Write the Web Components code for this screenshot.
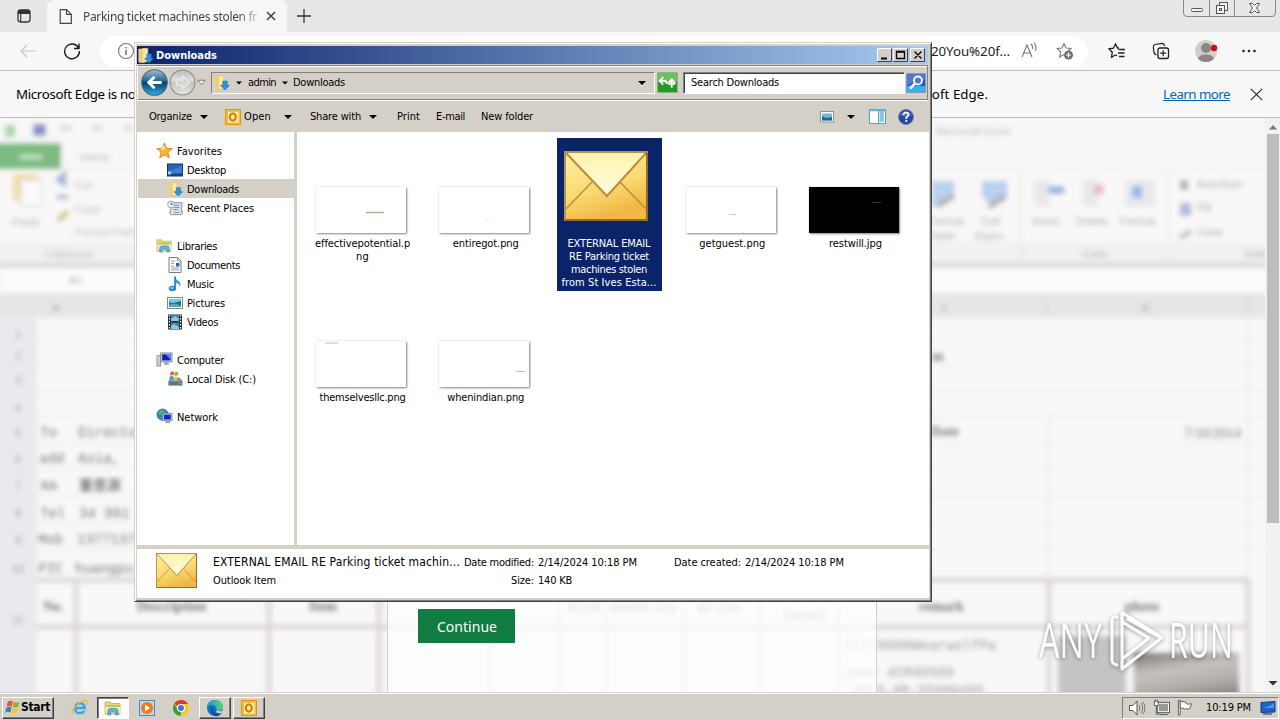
<!DOCTYPE html>
<html lang="en">
<head>
<meta charset="utf-8">
<title>Downloads</title>
<style>
  body { margin: 0; width: 1280px; height: 720px; overflow: hidden; }
</style>
</head>
<body>
<desk-top></desk-top>

<script>
const UI_FONT = `font: 11px/13px "DejaVu Sans Condensed", "DejaVu Sans", sans-serif;`;
const WEB_FONT = `font-family: "Noto Sans", "Open Sans", sans-serif;`;

// every icon: [viewBox size, markup]
const ICONS = {
  tabs: [16, `<rect x="2" y="2" width="12" height="12" rx="2.4" fill="none" stroke="#333" stroke-width="1.3"/><path d="M2 3.5Q2 2 4 2h8q2 0 2 2v2H2z" fill="#333"/><path d="M4.700 5v9" stroke="#333" stroke-width="1.1"/>`],
  page: [16, `<path d="M3 1.5h6l4.5 4.5v8.5H3zM9 1.5V6h4.5" fill="none" stroke="#444" stroke-width="1.1" stroke-linejoin="round"/>`],
  close: [16, `<path d="M4 4l8 8M12 4l-8 8" stroke="#444" stroke-width="1.6"/>`],
  cross: [16, `<path d="M1 1l14 14M15 1L1 15" stroke="#222" stroke-width="1.3"/>`],
  plus: [16, `<path d="M8 1v14M1 8h14" stroke="#333" stroke-width="1.3"/>`],
  back: [18, `<path d="M17 9H2M8 3L2 9l6 6" fill="none" stroke="#c6c6c6" stroke-width="1.2"/>`],
  reload: [18, `<path d="M15.7 6.2A7.4 7.4 0 1 0 16.4 9M16 1.5v5h-5" fill="none" stroke="#1b1b1b" stroke-width="1.4"/>`],
  info: [18, `<circle cx="9" cy="9" r="7.5" fill="none" stroke="#777" stroke-width="1.1"/><path d="M9 8v5M9 5v1.4" stroke="#666" stroke-width="1.4"/>`],
  read: [18, `<path d="M2 15L7 3l5 12M4 11h6M11 2q2.5 2.500 1.500 5M14 .8q3 3.500 1.500 8" fill="none" stroke="#777" stroke-width="1.1"/>`],
  starplus: [18, `<path d="M8 1.500l2 4.500 5 .5-3 3M8 1.500L6 6 1.200 6.500l3.500 3.500-1 5L8 12.500" fill="none" stroke="#777" stroke-width="1.1"/><circle cx="12.500" cy="13" r="4.500" fill="#707070"/><path d="M12.500 10.500v5M10 13h5" stroke="#fff" stroke-width="1.1"/>`],
  favs: [18, `<path d="M11 6H9.500L7.500 2 5.500 6.200 1 6.800l3.300 3.400-.8 5L7.500 13l1.500.8M10.500 7.500H17M10 11h6.500M11 14.500h5.500" fill="none" stroke="#222" stroke-width="1.3"/>`],
  collections: [18, `<rect x="6" y="6" width="10.500" height="10.500" rx="2" fill="none" stroke="#222" stroke-width="1.3"/><path d="M4.500 13Q2.500 12.500 2 10.500L1.300 5Q1.300 3 3 2.500L10 1.300q2 0 2.700 2.700M11.200 8.200v6M8.200 11.200h6" fill="none" stroke="#222" stroke-width="1.2"/>`],
  user: [24, `<clipPath id="c"><circle cx="12" cy="12" r="11"/></clipPath><circle cx="12" cy="12" r="11" fill="#cfcecc"/><g clip-path="url(#c)"><circle cx="12" cy="9" r="5" fill="#8b8683"/><ellipse cx="12" cy="20" rx="8" ry="4.500" fill="#8b8683"/></g><circle cx="20" cy="9" r="3.200" fill="#d20a18"/>`],
  dots: [18, `<g fill="#222"><circle cx="3.500" cy="9" r="1.300"/><circle cx="9" cy="9" r="1.300"/><circle cx="14.500" cy="9" r="1.300"/></g>`],

  downloads: [18, `<path d="M1.500 2l8-1 1.500 1v13.500l-8 1.500-1.500-1.500z" fill="#ecd27a"/><path d="M5.500 1.800l6-.5v14l-6 1.500z" fill="#f9e8a6" stroke="#d5b35b" stroke-width=".6"/><path d="M10.500 7.500h4.500v4.500h2.500L12.700 17 8 12h2.500z" fill="#2d95dc" stroke="#1470b5" stroke-width=".7"/>`],
  star: [18, `<path d="M9 1l2.200 5.600 6 .4-4.600 3.900 1.500 5.900L9 13.600l-5.100 3.200 1.500-5.900L.8 7l6-.4z" fill="#fbb52f" stroke="#c9731a" stroke-width=".8"/><path d="M9 3l1.300 4.600-6 .8z" fill="#ffe38c"/>`],
  desktop: [16, `<rect x=".5" y="2" width="15" height="12" fill="#2565b8" stroke="#17335f"/><path d="M1 9Q8 8 15 3v8H1z" fill="#377fd0"/><path d="M1 12h14v1.500H1z" fill="#153c75"/><circle cx="2.500" cy="11" r="1.800" fill="#a8d1ee"/>`],
  recent: [18, `<path d="M5 3h12l-1 10h2q0 3.500-2 3.500H5q-2 0-2-3h1z" fill="#dfe5e9" stroke="#7c8993"/><path d="M9 6h5M8 8.500h6M7 11h6M8 14h6" stroke="#6883a2"/><circle cx="4.500" cy="5" r="3.800" fill="#f2f5f8" stroke="#8a98a8"/><path d="M4.500 3v2h2" fill="none" stroke="#445"/>`],
  libraries: [18, `<path d="M1 3h5l1.500 1.500H16V15H1z" fill="#f1d577" stroke="#c59d3f" stroke-width=".7"/><path d="M2.500 6H15v4H2.500z" fill="#96d36c"/><path d="M1.500 8h15v6h-15z" fill="#f9ebad"/><path d="M4 16v-4q0-2.500 3-2.500h4q3 0 3 2.500v4h-2.500v-3h-5v3z" fill="#60b5e8" stroke="#2d83bd" stroke-width=".7"/>`],
  document: [16, `<path d="M2 .5h8.500L14 4v11.500H2z" fill="#fff" stroke="#747d88"/><path d="M10.500.5V4H14M4 4h4M4 6.500h3M4 9h3M4 11h8M4 13h8" fill="none" stroke="#8b9db5"/><path d="M9 6h3.500v3.500H9z" fill="#286bb4"/>`],
  music: [16, `<path d="M8 .5q.5 3 3.500 4.500 3 2 1.500 6Q12.500 7.500 9 7v5" fill="#3ba0df"/><path d="M8 .5v12" stroke="#1978be" stroke-width="1.6"/><ellipse cx="5.500" cy="12.500" rx="3.700" ry="2.800" fill="#1d8cd6"/><ellipse cx="5" cy="12" rx="1.800" ry="1" fill="#7cc9f4"/>`],
  picture: [16, `<rect x=".5" y="2.500" width="15" height="11" fill="#fff" stroke="#7e8893"/><path d="M2 4h12v8H2z" fill="#74c6ea"/><path d="M2 7l4 1 8-2v6H2z" fill="#167594"/><path d="M2 10q6-3 12 1v1H2z" fill="#63a99a"/>`],
  video: [16, `<rect x="1" y=".5" width="14" height="15" fill="#222c38"/><path d="M4 1h8v6H4zM4 8.500h8V15H4z" fill="#3d83b5"/><path d="M4 5l4-3 4 3v2H4zM4 12l3-2 5 3v2H4z" fill="#8fc8e2"/><path d="M2.500 1v15M13.500 1v15" stroke="#fff" stroke-width="1.200" stroke-dasharray="1.500 1.500"/>`],
  computer: [18, `<rect x="1" y="5" width="4" height="11" fill="#cbcfd4" stroke="#777" stroke-width=".7"/><rect x="5" y="2" width="12" height="9.500" fill="#c9d1dd" stroke="#707885" stroke-width=".8"/><path d="M6.500 3.500h9V10h-9z" fill="#1020c8"/><path d="M10 3.500h5.500V9z" fill="#6d80ff"/><path d="M9 11.500h4l1 3H8z" fill="#9da5ae"/>`],
  disk: [18, `<path d="M2 11l3-3h9l3 3v5H2z" fill="#8b9ba5" stroke="#55636d" stroke-width=".7"/><path d="M2.500 12h14v3.500h-14z" fill="#52798b"/><path d="M13 14h2" stroke="#5f5"/><path d="M4 1.500q2-1.500 4-.5l-.6 4q-2-1-4 .3z" fill="#e95d2c"/><path d="M8.700 1q2 .8 4-.3l-.6 4q-2 1-4 .2z" fill="#7cb93b"/><path d="M3.200 6.200q2-1 4-.2L6.600 10q-2-1-4 .2z" fill="#35a2de"/><path d="M8 6q2 .8 4-.2l-.6 4q-2 1-4 .2z" fill="#fac837"/>`],
  network: [18, `<circle cx="7" cy="7" r="6" fill="#2e88cd" stroke="#205b8e" stroke-width=".7"/><path d="M3 4q3-3 6-1L7 6 3 8zM6 9l4-1v4H7z" fill="#51b65a"/><rect x="7" y="5.500" width="10" height="8" fill="#c9d1dd" stroke="#687280" stroke-width=".7"/><path d="M8.300 7h7.400v5.200H8.300z" fill="#1326cb"/><path d="M10.500 13.500h4l1 2.500h-6z" fill="#9aa3ad"/>`],
  outlook: [16, `<rect x=".5" y=".5" width="15" height="15" fill="#f4bd35" stroke="#dc9718"/><rect x="3" y="3" width="10.500" height="10.500" fill="#fff1bd"/><ellipse cx="7.800" cy="8" rx="3" ry="3.700" fill="none" stroke="#d78300" stroke-width="2.300"/>`],
  view: [16, `<rect x="1.500" y="2.500" width="13" height="10.500" fill="#fff" stroke="#8296a5"/><path d="M3 4.500h10v7H3z" fill="#69bce2"/><path d="M3 7l4 2 6-1v3.500H3z" fill="#236b80"/>`],
  preview: [16, `<rect x=".5" y="1.500" width="15" height="13" fill="#fff" stroke="#58a0c8"/><path d="M10 3h4v10h-4z" fill="#8dc3e2"/><path d="M1 2.500h14M9 2v12" stroke="#58a0c8"/>`],
  help: [16, `<circle cx="8" cy="8" r="7.500" fill="#2247a9" stroke="#7382a9"/><path d="M2 6Q8-2 14 6 8 9 2 6z" fill="#6488dc" opacity=".65"/><path d="M5.500 6q0-2.300 2.500-2.300T10.500 6Q10.500 7.300 8.300 8.300V10" fill="none" stroke="#fff" stroke-width="1.700"/><circle cx="8.300" cy="12" r="1.100" fill="#fff"/>`],
  navback: [26, `<defs><linearGradient id="g" x2="0" y2="1"><stop stop-color="#a7bfce"/><stop offset=".45" stop-color="#1c6491"/><stop offset=".5" stop-color="#073e65"/><stop offset="1" stop-color="#2ab1e5"/></linearGradient></defs><circle cx="13" cy="13" r="12.300" fill="url(#g)" stroke="#436480"/><path d="M20 13H8M13 7.500L7.500 13l5.500 5.500" fill="none" stroke="#fff" stroke-width="2.800"/>`],
  navnext: [26, `<defs><linearGradient id="g" x2="0" y2="1"><stop stop-color="#bbb"/><stop offset=".4" stop-color="#ddd"/><stop offset=".5" stop-color="#c6c4bf"/><stop offset="1" stop-color="#e8e6e1"/></linearGradient></defs><circle cx="13" cy="13" r="12" fill="url(#g)" stroke="#888"/><path d="M7 10.500h6V7l6.500 6-6.500 6v-3.500H7z" fill="#d6d4d0" stroke="#eee" stroke-width="1.100"/>`],
  refresh: [20, `<rect x=".5" y=".5" width="19" height="19" rx="1" fill="#239a26" stroke="#8cb38c"/><path d="M1 1h18v8q-9 3-18 0z" fill="#6cc062"/><path d="M3 8.500h6M6 5L2.500 8.500 6 12M9 8.500v3M17 11.500h-6M14 15v-7M10.500 11l3.500-4 3.500 4" fill="none" stroke="#fff" stroke-width="1.700"/>`],
  search: [20, `<rect x=".5" y=".5" width="19" height="19" rx="1" fill="#2856c8" stroke="#7f96bd"/><path d="M1 13h18v6H1z" fill="#2bb5e9"/><path d="M1 1h18v6Q9 7 1 13z" fill="#5577d3"/><circle cx="12" cy="7.500" r="4" fill="#4a77d8" stroke="#fff" stroke-width="1.800"/><path d="M9 10.500l-5 5" stroke="#fff" stroke-width="2.500"/>`],

  winflag: [18, `<path d="M4 3q3-2 5.500-.3L8.300 8Q5.500 6.500 2.800 8.200z" fill="#e8562a"/><path d="M10.300 3q3 1.600 6-.2L15 8q-3 1.700-5.800.2z" fill="#7db93c"/><path d="M2.500 9.200Q5.200 7.500 8 9l-1.200 5.300Q4 12.700 1.200 14.500z" fill="#2f7fd1"/><path d="M9 9.200q3 1.600 5.800 0l-1.300 5.300q-2.800 1.700-5.700 0z" fill="#f9c52e"/>`],
  ie: [18, `<path d="M5 9.500h9.500Q14 4.500 9.500 4.500T4.500 9.800 9.500 15q3 0 4.800-2.300" fill="none" stroke="#35a7e3" stroke-width="2.500"/><path d="M2 16Q-1 13 7 6t10-4q1 1-1 4" fill="none" stroke="#e9b338" stroke-width="1.300"/>`],
  wmp: [16, `<rect x=".5" y=".5" width="15" height="15" fill="#b8d8f1" stroke="#4f89c0"/><circle cx="8" cy="8" r="6" fill="#f47b12"/><path d="M6 4.500l5 3.500-5 3.500z" fill="#fff"/>`],
  chrome: [18, `<circle cx="9" cy="9" r="8" fill="#f8c91d"/><path d="M9 9L2 5a8 8 0 0 1 14 .1H9z" fill="#df3b2d"/><path d="M9 9l-.5 8A8 8 0 0 1 2 5l4 6z" fill="#2c9f4c"/><circle cx="9" cy="9" r="4" fill="#fff"/><circle cx="9" cy="9" r="3" fill="#3477e6"/>`],
  edge: [18, `<defs><linearGradient id="g"><stop stop-color="#169bdf"/><stop offset="1" stop-color="#62d36b"/></linearGradient></defs><circle cx="9" cy="9" r="8" fill="#1271c3"/><path d="M1 9Q1 1 9 1t8 7q0 4-5 4-2 0-1.500-2Q10 6 6.500 6 2 6 1 9z" fill="url(#g)"/><path d="M7 8q-2 7 7 6.500l2-.8Q13 18 9 17 4 15 5 10z" fill="#114f9f"/><path d="M11 11.500q3 1.500 6 0L15.500 14q-3.500.8-5.500-1z" fill="#d4d0c8"/>`],
  volume: [18, `<path d="M1.500 6.500H5L9 2v14l-4-4.500H1.500z" fill="#fff" stroke="#555"/><path d="M11 6q2 3 0 6M13 4q3.500 5 0 10M15.200 3q3.500 6 0 12" fill="none" stroke="#777"/>`],
  lan: [18, `<rect x="5.500" y="4.500" width="11" height="9" fill="#999" stroke="#fff"/><rect x="4.500" y="3.500" width="13" height="11" fill="none" stroke="#555"/><path d="M8 16.500h8" stroke="#555"/><path d="M1.500 2v5h4V2M3.500 7v9h5M2.500.5V3M4.500.5V3" fill="none" stroke="#555"/><path d="M2 3.500h3v3H2z" fill="#fff"/>`],
  flag: [18, `<path d="M2.500 17V1.500h2V17z" fill="#fff" stroke="#555"/><path d="M4.500 3q3-1 6 .5 0 1.500 1.500 2l4.500-.5-2 5.500H9Q7 9 4.500 10z" fill="#fff" stroke="#555"/>`],
  screen: [16, `<path d="M1 2.500l14-1v10.500l-14 .5z" fill="#1c64c8" stroke="#0c3e8d"/><path d="M2 8Q8 8 14 3v5z" fill="#4d97ea"/><path d="M3 14h9" stroke="#3d6189" stroke-width="1.500"/>`],
  down: [8, `<path d="M0 2h8L4 6z" fill="#000"/>`],
  hollow: [10, `<path d="M.8 2.500h8.400L5 7.500z" fill="#eee" stroke="#777"/>`],
  up: [10, `<path d="M1 7.500h8L5 3z" fill="#777"/>`],
  scrolldown: [10, `<path d="M.5 3h9L5 7.500z" fill="#333"/>`]
};

class UiIcon extends HTMLElement {
  connectedCallback() {
    const size = this.getAttribute('size') || 16;
    const [box, art] = ICONS[this.getAttribute('name')];
    this.attachShadow({ mode: 'open' }).innerHTML = `
      <style>:host { display: block; flex: none; width: ${size}px; height: ${size}px } svg { display: block }</style>
      <svg width="${size}" height="${size}" viewBox="0 0 ${box} ${box}">${art}</svg>`;
  }
}

// One line of text, tracked so that it takes exactly `w` pixels
class FitText extends HTMLElement {
  connectedCallback() {
    this.attachShadow({ mode: 'open' }).innerHTML = `
      <style>:host { display: block; flex: none; white-space: nowrap; width: ${this.getAttribute('w')}px }
      span { display: inline-block; text-decoration: inherit }</style><span><slot></slot></span>`;
    const span = this.shadowRoot.querySelector('span');
    const rest = this.getAttribute('w') - span.getBoundingClientRect().width;
    span.style.letterSpacing = `${rest / this.textContent.length}px`;
  }
}

class MailEnvelope extends HTMLElement {
  connectedCallback() {
    this.attachShadow({ mode: 'open' }).innerHTML = `
      <style>:host { display: block } svg { display: block; width: 100%; height: 100% }</style>
      <svg viewBox="0 0 84 70" preserveAspectRatio="none">
        <defs>
          <linearGradient id="body" x1="0" y1="0" x2=".4" y2="1"><stop stop-color="#fff0a8"/><stop offset=".6" stop-color="#f9da72"/><stop offset="1" stop-color="#f0b843"/></linearGradient>
          <linearGradient id="flap" x1="0" y1="0" x2="0" y2="1"><stop stop-color="#fff3b0"/><stop offset="1" stop-color="#fffbe0"/></linearGradient>
        </defs>
        <rect x="1" y="1" width="82" height="68" fill="url(#body)" stroke="#b7944d" stroke-width="2"/>
        <path d="M2 58L28 31M82 58L56 31" stroke="#c4933c" stroke-width="1.800"/>
        <path d="M2 2L43 45 82 2z" fill="url(#flap)"/>
        <path d="M2 2L43 45 82 2" fill="none" stroke="#b98b3a" stroke-width="2"/>
        <path d="M1 69h82V2" fill="none" stroke="#886126" stroke-width="1.600"/>
      </svg>`;
  }
}

class EdgeHeader extends HTMLElement {
  constructor() {
    super();
    this.attachShadow({ mode: 'open' }).innerHTML = `
    <style>
      :host { display: block; ${WEB_FONT} color: #222; background: #f7f7f7 }
      .strip { display: flex; height: 32px; background: #e7e7e7; align-items: center }
      .strip > ui-icon { margin-left: 16px }
      .tab { display: flex; align-items: center; width: 240px; height: 32px; margin-left: 15px; padding-left: 10px; box-sizing: border-box; background: #f7f7f7; border-radius: 7px 7px 0 0; font-size: 12px; color: #444 }
      .tab fit-text { margin: 0 6px 0 9px; -webkit-mask: linear-gradient(90deg, #000 88%, #0004) }
      .tab + ui-icon { margin-left: 9px }
      .caption { display: flex; align-self: flex-start; margin: -1px 4px 0 auto; height: 18px; width: 93px; box-sizing: border-box; border: 1px solid #888; border-radius: 0 0 4px 4px }
      .caption svg { display: block }
      .tools { display: flex; height: 38px; align-items: center; border-bottom: 1px solid #bcbcbc; font-size: 13.300px }
      .tools > .back { margin: 0 26px 0 19px }
      .pill { display: flex; align-items: center; width: 988px; height: 31px; margin-left: 19px; padding: 0 14px 0 17px; box-sizing: border-box; border-radius: 16px; background: #fff }
      .pill fit-text { margin-left: auto; color: #222 }
      .pill .read { margin: 0 18px 0 10px }
      .tools > .favs { margin: 0 26px 0 20px }
      .tools > .user { margin: 0 22px 0 24px }
      .info { display: flex; height: 46px; align-items: center; border-bottom: 1px solid #bcbcbc; font-size: 13.300px; color: #000; padding: 0 17px 0 16px }
      .info .end { margin-left: auto }
      .info .more { margin: 0 20px 0 175px; color: #0067b8; text-decoration: underline }
    </style>
    <div class="strip">
      <ui-icon name="tabs"></ui-icon>
      <div class="tab"><ui-icon name="page" size="17"></ui-icon><fit-text w="174">Parking ticket machines stolen fr</fit-text><ui-icon name="close"></ui-icon></div>
      <ui-icon name="plus"></ui-icon>
      <div class="caption">
        <svg width="92" height="16" fill="#f5f5f5" stroke="#555"><path d="M25.500 0v16M50.500 0v16" stroke="#888"/><rect x="7.500" y="8.500" width="11" height="3" rx="1"/><rect x="35.500" y="2.500" width="8" height="8"/><rect x="32.500" y="5.500" width="8" height="8"/><rect x="35.500" y="8.500" width="2" height="2"/><path d="M65.500 3.500h3l2 2 2-2h3l-3 4.500 3 4.500h-3l-2-2-2 2h-3l3-4.500z"/></svg>
      </div>
    </div>
    <div class="tools">
      <ui-icon class="back" name="back" size="18"></ui-icon><ui-icon name="reload" size="18"></ui-icon>
      <div class="pill"><ui-icon name="info" size="18"></ui-icon><fit-text w="90">%20You%20f...</fit-text><ui-icon class="read" name="read" size="18"></ui-icon><ui-icon name="starplus" size="18"></ui-icon></div>
      <ui-icon class="favs" name="favs" size="18"></ui-icon><ui-icon name="collections" size="18"></ui-icon>
      <ui-icon class="user" name="user" size="24"></ui-icon><ui-icon name="dots" size="18"></ui-icon>
    </div>
    <div class="info">
      <fit-text w="124">Microsoft Edge is not</fit-text>
      <fit-text class="end" w="98">Microsoft Edge.</fit-text>
      <fit-text class="more" w="67">Learn more</fit-text>
      <ui-icon name="cross" size="13"></ui-icon>
    </div>`;
  }
}

// Out-of-focus spreadsheet behind the sign-in panel
class BlurredSheet extends HTMLElement {
  constructor() {
    super();
    const lines = [318, 341, 365, 391, 417, 443, 469, 497, 523, 549]
      .map(y => `<path d="M0 ${y}H1265" stroke="#e8e5ea"/>`).join('');
    const rows = [334, 356, 380, 408, 433, 459, 486, 513, 540, 569, 620]
      .map((y, i) => `<text x="18" y="${y + 4}" text-anchor="middle">${i + 1}</text>`).join('');
    this.attachShadow({ mode: 'open' }).innerHTML = `
    <style>
      :host { display: block; overflow: hidden; background: #faf7f8 }
      svg { display: block }
      text { font: 11px "Liberation Sans", sans-serif; fill: #96949c }
      .serif text { font: 14px "Liberation Mono", "Noto Sans CJK SC", monospace; fill: #77757a }
      .serif .bold { font: bold 14px "Liberation Serif", serif; fill: #777 }
    </style>
    <svg width="1265" height="574" viewBox="0 118 1265 574">
      <defs><filter id="soft" x="-5%" y="-5%" width="110%" height="110%"><feGaussianBlur stdDeviation="2.700"/></filter>
      <linearGradient id="photo" x2=".3" y2="1"><stop stop-color="#777"/><stop offset=".35" stop-color="#c5c1bd"/><stop offset=".6" stop-color="#b5b2af"/><stop offset="1" stop-color="#777"/></linearGradient></defs>
      <g filter="url(#soft)">
        <rect x="-10" y="110" width="1290" height="60" fill="#f8f6f7"/>
        <path d="M5 125h10v12H5z" fill="#a9d7a4"/><path d="M33 124h13v12H33z" fill="#8492c4"/><path d="M60 128h12M92 128h10M124 128h9" stroke="#d4d4d4" stroke-width="4"/>
        <path d="M-5 143h66v26H-5z" fill="#7cbb82"/><path d="M20 157h22" stroke="#c2e0c1" stroke-width="5"/>
        <text x="80" y="161" opacity=".7">Home</text>
        <path d="M61 169H1280" stroke="#e4e4e4"/>
        <path d="M-5 242h1290v22H-5z" fill="#f1f1f1"/>
        <rect x="13" y="174" width="26" height="27" rx="3" fill="#f3dcab"/><rect x="21" y="180" width="21" height="26" fill="#fafafa" stroke="#c8cbd6"/>
        <text x="12" y="226" y="211" opacity=".7">Paste</text><path d="M58 180l6-6v10zM57 197h11" stroke="#a5b5d1" stroke-width="4"/><path d="M58 220l10-8" stroke="#d0c592" stroke-width="5"/>
        <g opacity=".6"><text x="75" y="189">Cut</text><text x="75" y="213">Copy</text><text x="75" y="236">Format Painter</text><text x="45" y="258">Clipboard</text></g>
        <text x="936" y="135" opacity=".65">Microsoft Excel</text>
        <path d="M932 181h22v18l-14 8h-8zM982 181h25v18l-14 8-11-10z" fill="#b9d0ee"/><path d="M938 206l16-11M989 207l16-11" stroke="#adb1b2" stroke-width="5"/>
        <path d="M1034 180h16v26h-16zM1083 180h15v26h-15zM1125 180h30v27h-30z" fill="#e8e8eb"/><path d="M1048 190h16" stroke="#94b3e0" stroke-width="7"/><path d="M1094 185l9 9M1103 185l-9 9" stroke="#e4a0a0" stroke-width="3"/><path d="M1132 186h10v12h-10z" fill="#93b7ee"/>
        <g opacity=".75"><text x="929" y="225">Format</text><text x="929" y="240">Table</text><text x="981" y="225">Cell</text><text x="974" y="240">Styles</text><text x="1032" y="225">Insert</text><text x="1076" y="225">Delete</text><text x="1120" y="225">Format</text>
        <text x="1197" y="188">AutoSum</text><text x="1197" y="211">Fill</text><text x="1197" y="236">Clear</text><text x="1083" y="258">Cells</text><text x="1245" y="258">Editing</text></g>
        <path d="M1180 180h8v10h-8z" fill="#b5b5b5"/><path d="M1180 203h11v13h-11z" fill="#b0bcde"/><path d="M1180 238l11-7" stroke="#bbb" stroke-width="4"/>
        <path d="M1021 172v90M1168 172v90" stroke="#e2e2e2"/>
        <path d="M-5 265H1280" stroke="#dadada" stroke-width="5"/>
        <rect x="3" y="271" width="1290" height="20" fill="#fdfbfc"/><text x="69" y="284">A1</text>
        <path d="M-5 293h1290v24H-5z" fill="#e6e6e7"/><text x="52" y="312">A</text><text x="940" y="312">J</text><text x="1142" y="312">K</text><path d="M1046 296v18M1248 296v18" stroke="#d2d2d2"/>
        ${lines}
        <rect x="-5" y="316" width="42" height="390" fill="#e9e9ef"/>${rows}
        <path d="M1248 316v264M1049 417v163" stroke="#e2dfe4"/>
        <g class="serif">
          <text x="40" y="437">To</text><text x="78" y="437">Director</text>
          <text x="39" y="463">add</text><text x="78" y="463">Asia, </text>
          <text x="40" y="490">Am</text><text x="79" y="490" style="fill:#444">董思源</text>
          <text x="40" y="518">Tel</text><text x="79" y="518">34 991</text>
          <text x="38" y="544">Mob</text><text x="77" y="544">13771371</text>
          <text x="38" y="573">PIC</text><text x="75" y="573">huangpu</text>
          <text class="bold" x="932" y="361">m</text><text class="bold" x="931" y="436">Date</text><text class="bold" x="1184" y="438" style="font-weight:400">7/10/2014</text>
          <path d="M37 580H1250M37 627H1250M76 580V700M269 580V700M379 580V700M1049 580V700M1248 580V700" stroke="#dbd7da" stroke-width="5" fill="none"/>
          <text class="bold" x="43" y="611">No.</text><text class="bold" x="137" y="611">Description</text><text class="bold" x="309" y="611">Item</text><text class="bold" x="919" y="611">remark</text><text class="bold" x="1125" y="611">photo</text>
          <path d="M490 580V700M559 580V700M606 580V700M684 580V700M760 580V700M838 580V700" stroke="#dcd8db" stroke-width="3"/>
          <text x="568" y="612">Size</text><text x="610" y="612">quantity</text><text x="698" y="612">price</text><text x="784" y="620">total</text>
          <g style="opacity:.7"><text x="845" y="650">LC770000WearwolfPa</text><text x="845" y="677">year 4CM40500</text><text x="850" y="695">2013-4M-35000405</text></g>
        </g>
        <rect x="1058" y="636" width="68" height="70" fill="#c6c3c6"/><rect x="1134" y="653" width="105" height="60" fill="url(#photo)"/>
      </g>
    </svg>`;
  }
}

class SheetPage extends HTMLElement {
  constructor() {
    super();
    this.attachShadow({ mode: 'open' }).innerHTML = `
    <style>
      :host { display: flex; position: relative; height: 574px; overflow: hidden }
      .bar { width: 15px; background: #f1f1f1; display: flex; flex-direction: column; align-items: center; padding: 4px 0; box-sizing: border-box }
      .thumb { width: 12px; height: 389px; background: #bdbdbd; margin: 2px 0 auto }
      .panel { position: absolute; left: 387px; top: 0; width: 488px; height: 574px; border: solid #c7d2cd; border-width: 0 1px; background: #fffb; display: flex; align-items: flex-end }
      button { width: 97px; height: 34px; margin: 0 0 49px 30px; padding: 0 0 0 19px; border: 0; background: #107c41; color: #fff; font-size: 14px; ${WEB_FONT} text-align: left }
    </style>
    <blurred-sheet></blurred-sheet>
    <div class="bar"><ui-icon name="up" size="10"></ui-icon><div class="thumb"></div><ui-icon name="scrolldown" size="10"></ui-icon></div>
    <div class="panel"><button><fit-text w="60">Continue</fit-text></button></div>`;
  }
}

class FileItem extends HTMLElement {
  connectedCallback() {
    const label = this.getAttribute('label').split('|').map(l => {
      const [text, w] = l.split('~');
      return `<fit-text w="${w}">${text}</fit-text>`;
    }).join('');
    this.attachShadow({ mode: 'open' }).innerHTML = `
    <style>
      :host { display: block; width: 105px; height: 153px; color: #000 }
      :host([selected]) { background: #0a246a; color: #fff }
      .art { display: flex; height: 95px; align-items: flex-end; justify-content: center }
      .label { display: flex; flex-direction: column; align-items: center; padding-top: 4px }
      ::slotted(mail-envelope) { width: 84px; height: 70px; margin: 0 7px 12px 0 }
      ::slotted(svg) { display: block; width: 90px; height: 46px; margin-right: 3px; background: #fff; box-shadow: 1px 1px 2px #0007, 0 0 1px #0003 }
    </style>
    <div class="art"><slot></slot></div><div class="label">${label}</div>`;
  }
}

// icon, label, label width, level; null leaves a blank row
const PLACES = [
  ['star', 'Favorites', 45, 0], ['desktop', 'Desktop', 39, 1], ['downloads', 'Downloads', 52, 1], ['recent', 'Recent Places', 67, 1], null,
  ['libraries', 'Libraries', 40, 0], ['document', 'Documents', 53, 1], ['music', 'Music', 27, 1], ['picture', 'Pictures', 38, 1], ['video', 'Videos', 31, 1], null,
  ['computer', 'Computer', 47, 0], ['disk', 'Local Disk (C:)', 69, 1], null,
  ['network', 'Network', 41, 0]
];

class PlacesTree extends HTMLElement {
  constructor() {
    super();
    this.attachShadow({ mode: 'open' }).innerHTML = `
    <style>
      :host { display: block; width: 157px; padding-top: 9px; background: #fff; box-sizing: border-box }
      .row { display: flex; align-items: center; height: 19px; margin-left: 1px; padding-left: 18px; gap: 4px }
      .row fit-text { padding-top: 2px }
      .sub { padding-left: 29px }
      .sel { background: #d4d0c8 }
    </style>
    ${PLACES.map(p => p ? `<div class="row ${p[3] ? 'sub' : ''} ${p[1] === 'Downloads' ? 'sel' : ''}">
      <ui-icon name="${p[0]}" size="${p[3] ? 16 : 17}"></ui-icon><fit-text w="${p[2]}">${p[1]}</fit-text></div>` : '<div class="row"></div>').join('')}`;
  }
}

class ExplorerWindow extends HTMLElement {
  constructor() {
    super();
    this.attachShadow({ mode: 'open' }).innerHTML = `
    <style>
      :host { display: flex; flex-direction: column; box-sizing: border-box; width: 798px; height: 560px; background: #d4d0c8; ${UI_FONT} color: #000;
        border: 1px solid; border-color: #d4d0c8 #404040 #404040 #d4d0c8; box-shadow: inset 1px 1px #fff, inset -1px -1px #808080; padding: 3px 2px }
      .title { display: flex; align-items: center; height: 18px; flex: none; margin: 0 1px 0 0; background: linear-gradient(90deg, #0a246a, #a6caf0); color: #fff; font-weight: bold }
      .title fit-text { margin: 0 auto 0 2px; padding-left: 0 }
      .title svg { display: block; margin-right: 2px }
      .nav { display: flex; align-items: center; height: 35px; flex: none; box-sizing: border-box; margin: 1px 1px 0 0; border: solid; border-width: 1px; border-color: #808080 #808080 #808080 #fff; box-shadow: inset 0 1px #fff, 0 1px #fff; padding: 0 1px 0 3px }
      .nav > .hollow { margin: 0 5px 0 1px }
      .sunk { display: flex; align-items: center; height: 22px; box-sizing: border-box; border: 1px solid; border-color: #808080 #fff #fff #808080 }
      .path { width: 444px; padding-left: 1px }
      .path > .first { margin: 0 6px }
      .path > .second { margin: 0 5px 0 6px }
      .path > .drop { margin: 0 8px 0 auto }
      .nav > .go { margin: 0 5px 0 2px }
      .find { width: 222px; background: #fff; padding-left: 7px; margin-right: 1px; box-shadow: inset 1px 1px #404040 }
      .cmds { display: flex; align-items: center; height: 31px; flex: none; padding: 1px 15px 0 12px }
      .panes { display: flex; height: 413px; background: #fff }
      places-tree { flex: none }
      .split { width: 3px; background: #d4d0c8 }
      .files { display: grid; grid-template-columns: repeat(5, 105px); grid-auto-rows: 153px; gap: 1px 18.250px; padding: 6px 0 0 13px; align-content: start }
      .details { display: flex; height: 49px; margin-top: 4px; background: #fff; padding-left: 19px }
      .details mail-envelope { width: 41px; height: 35px; margin: 4px 16px 0 0 }
      .col { display: flex; flex-direction: column; gap: 5px; padding-top: 7px }
      .pair { display: grid; grid-template-columns: auto 99px; gap: 4px; justify-content: end }
      .big { font-size: 12px }
    </style>
    <div class="title"><ui-icon name="downloads" size="17"></ui-icon><fit-text w="61">Downloads</fit-text>
      <svg width="49" height="14"><g fill="#d4d0c8" stroke="#404040"><path d="M.5.5h14v13H.500zM16.500.5h14v13h-14zM33.500.5h14v13h-14z"/></g><path d="M.5 13V.5h14M16.500 13V.5h14M33.500 13V.5h14" fill="none" stroke="#fff"/><path d="M4 10.500h6" stroke="#000" stroke-width="2"/><path d="M19.500 3.500h8v7h-8zM19 4h9M37.500 3.500l7 7M44.500 3.500l-7 7" fill="none" stroke="#000" stroke-width="1.300"/></svg>
    </div>
    <div class="nav">
      <ui-icon name="navback" size="27"></ui-icon><ui-icon name="navnext" size="27" style="margin-left:1px"></ui-icon><ui-icon class="hollow" name="hollow" size="9"></ui-icon>
      <div class="sunk path"><ui-icon name="downloads" size="17"></ui-icon><ui-icon class="first" name="down" size="6"></ui-icon><fit-text w="28">admin</fit-text><ui-icon class="second" name="down" size="6"></ui-icon><fit-text w="52">Downloads</fit-text><ui-icon class="drop" name="down" size="8"></ui-icon></div>
      <ui-icon class="go" name="refresh" size="21"></ui-icon>
      <div class="sunk find"><fit-text w="88">Search Downloads</fit-text></div>
      <ui-icon name="search" size="20"></ui-icon>
    </div>
    <div class="cmds">
      <fit-text w="43">Organize</fit-text><ui-icon name="down" size="8" style="margin:0 17px 0 8px"></ui-icon>
      <ui-icon name="outlook" size="16" style="margin-right:3px"></ui-icon><fit-text w="27">Open</fit-text><ui-icon name="down" size="8" style="margin:0 18px 0 13px"></ui-icon>
      <fit-text w="51">Share with</fit-text><ui-icon name="down" size="8" style="margin:0 20px 0 8px"></ui-icon>
      <fit-text w="23" style="margin-right:16px">Print</fit-text><fit-text w="29" style="margin-right:16px">E-mail</fit-text><fit-text w="52">New folder</fit-text>
      <ui-icon name="view" size="16" style="margin-left:auto"></ui-icon><ui-icon name="down" size="8" style="margin:0 14px 0 12px"></ui-icon><ui-icon name="preview" size="17" style="margin-right:12px"></ui-icon><ui-icon name="help" size="16"></ui-icon>
    </div>
    <div class="panes">
      <places-tree></places-tree><div class="split"></div>
      <div class="files">
        <file-item label="effectivepotential.p~95|ng~13"><svg><path d="M50 25.500h18" stroke="#bba98d" stroke-width="1.500"/></svg></file-item>
        <file-item label="entiregot.png~66"><svg><path d="M46 33.500h5" stroke="#eee"/></svg></file-item>
        <file-item selected label="EXTERNAL EMAIL~83|RE Parking ticket~80|machines stolen~76|from St Ives Esta...~95"><mail-envelope></mail-envelope></file-item>
        <file-item label="getguest.png~66"><svg><path d="M43 27.500h7" stroke="#ccc"/></svg></file-item>
        <file-item label="restwill.jpg~53"><svg style="background:#000"><path d="M63 15.500h9" stroke="#333"/></svg></file-item>
        <file-item label="themselvesllc.png~86"><svg><path d="M9 2h13" stroke="#abc1dc"/></svg></file-item>
        <file-item label="whenindian.png~77"><svg><path d="M77 30.500h9" stroke="#dcb5b5"/></svg></file-item>
      </div>
    </div>
    <div class="details">
      <mail-envelope></mail-envelope>
      <div class="col"><fit-text class="big" w="247">EXTERNAL EMAIL RE Parking ticket machin...</fit-text><fit-text w="63">Outlook Item</fit-text></div>
      <div class="col" style="margin-left:4px"><div class="pair"><fit-text w="70">Date modified:</fit-text><fit-text w="99">2/14/2024 10:18 PM</fit-text></div><div class="pair"><fit-text w="23">Size:</fit-text><fit-text w="34">140 KB</fit-text></div></div>
      <div class="col" style="margin-left:37px"><div class="pair"><fit-text w="67">Date created:</fit-text><fit-text w="99">2/14/2024 10:18 PM</fit-text></div></div>
    </div>`;
  }
}

class TaskBar extends HTMLElement {
  constructor() {
    super();
    this.attachShadow({ mode: 'open' }).innerHTML = `
    <style>
      :host { display: flex; align-items: center; box-sizing: border-box; height: 28px; padding: 3px 1px 0 2px; background: #d4d0c8; box-shadow: inset 0 1px #d4d0c8, inset 0 2px #fff; ${UI_FONT} }
      .btn { display: flex; align-items: center; justify-content: center; box-sizing: border-box; width: 32px; height: 22px; border: 1px solid; border-color: #fff #404040 #404040 #fff; box-shadow: inset -1px -1px #808080 }
      .start { width: 52px; font-weight: bold; font-size: 12px; justify-content: flex-start; padding-left: 1px }
      .down { border-color: #404040 #fff #fff #404040; box-shadow: inset 1px 1px #808080; background: #fff }
      .tray { display: flex; align-items: center; box-sizing: border-box; width: 157px; height: 22px; margin-left: auto; border: 1px solid; border-color: #808080 #fff #fff #808080; padding: 0 2px 0 5px }
    </style>
    <div class="btn start"><ui-icon name="winflag" size="17"></ui-icon><fit-text w="29">Start</fit-text></div>
    <ui-icon name="ie" size="17" style="margin:0 9px 0 17px"></ui-icon>
    <div class="btn down"><ui-icon name="libraries" size="18"></ui-icon></div>
    <ui-icon name="wmp" size="16" style="margin:0 17px 0 10px"></ui-icon>
    <ui-icon name="chrome" size="18" style="margin-right:9px"></ui-icon>
    <div class="btn"><ui-icon name="edge" size="18"></ui-icon></div>
    <div class="btn" style="margin-left:2px"><ui-icon name="outlook" size="16"></ui-icon></div>
    <div class="tray"><ui-icon name="volume" size="18"></ui-icon><ui-icon name="lan" size="17" style="margin:0 6px 0 7px"></ui-icon><ui-icon name="flag" size="17"></ui-icon>
      <fit-text w="45" style="margin:0 9px 0 13px">10:19 PM</fit-text><ui-icon name="screen" size="16"></ui-icon></div>`;
  }
}

class AnyrunMark extends HTMLElement {
  constructor() {
    super();
    this.attachShadow({ mode: 'open' }).innerHTML = `
    <style>
      :host { display: block; filter: drop-shadow(0 1px 2px #0006); opacity: .92 }
      svg { display: block }
      text { font: 400 49px "Open Sans", sans-serif; fill: #fff }
    </style>
    <svg width="216" height="80" viewBox="1030 600 216 80">
      <text x="1039" y="658" textLength="63" lengthAdjust="spacingAndGlyphs">ANY</text>
      <text x="1169" y="658" textLength="64" lengthAdjust="spacingAndGlyphs">RUN</text>
      <g fill="none" stroke="#fff" stroke-width="3" stroke-linejoin="round" stroke-linecap="round">
        <path d="M1122 657V612.500l40 25-40 31.500v-10l27-21-27-16"/>
        <path d="M1117 617q-5-1-5 3v40q0 4 5 5M1128 619l31 18"/>
      </g>
    </svg>`;
  }
}

class DeskTop extends HTMLElement {
  constructor() {
    super();
    this.attachShadow({ mode: 'open' }).innerHTML = `
    <style>
      :host { display: flex; flex-direction: column; position: relative; width: 1280px; height: 720px; overflow: hidden }
      explorer-window { position: absolute; left: 134px; top: 42px }
      anyrun-mark { position: absolute; left: 1030px; top: 600px }
    </style>
    <edge-header></edge-header>
    <sheet-page></sheet-page>
    <task-bar></task-bar>
    <explorer-window></explorer-window>
    <anyrun-mark></anyrun-mark>`;
  }
}

customElements.define('ui-icon', UiIcon);
customElements.define('fit-text', FitText);
customElements.define('mail-envelope', MailEnvelope);
customElements.define('edge-header', EdgeHeader);
customElements.define('blurred-sheet', BlurredSheet);
customElements.define('sheet-page', SheetPage);
customElements.define('file-item', FileItem);
customElements.define('places-tree', PlacesTree);
customElements.define('explorer-window', ExplorerWindow);
customElements.define('task-bar', TaskBar);
customElements.define('anyrun-mark', AnyrunMark);
customElements.define('desk-top', DeskTop);
</script>
</body>
</html>
